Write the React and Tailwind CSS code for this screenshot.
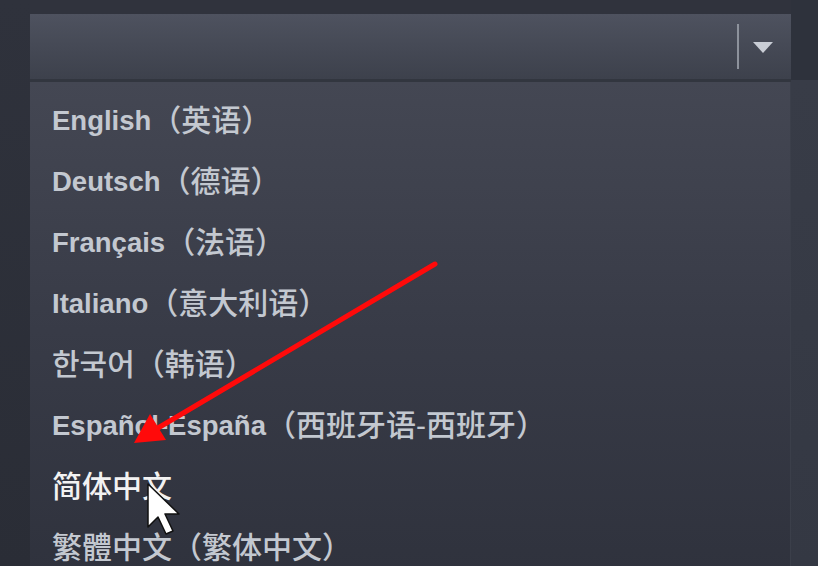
const languages = [
  { latin: "English", cjk: "（英语）" },
  { latin: "Deutsch", cjk: "（德语）" },
  { latin: "Français", cjk: "（法语）" },
  { latin: "Italiano", cjk: "（意大利语）" },
  { latin: "", cjk: "한국어（韩语）" },
  { latin: "Español-España", cjk: "（西班牙语-西班牙）" },
  { latin: "", cjk: "简体中文", active: true },
  { latin: "", cjk: "繁體中文（繁体中文）" },
];

export default function App() {
  return (
    <div
      className="relative w-[818px] h-[566px] overflow-hidden flex bg-[#2b2e37]"
      style={{ fontFamily: '"Liberation Sans", Arial, "Noto Sans CJK SC", "Noto Sans CJK KR", sans-serif' }}
    >
      {/* left gutter */}
      <div className="w-[30px] shrink-0 bg-gradient-to-b from-[#2f323c] to-[#2a2d36]" />

      {/* select + open list */}
      <div className="w-[761px] shrink-0 flex flex-col pt-[14px] bg-[#30333d]">
        <div className="h-[68px] shrink-0 flex items-center justify-end bg-gradient-to-b from-[#4e525f] to-[#3d414c] border-b-[3px] border-[#32363f]">
          <div className="w-[2px] h-[45px] bg-[#8d929c] mr-[14px]" />
          <div className="w-0 h-0 border-l-[10px] border-r-[10px] border-t-[11px] border-l-transparent border-r-transparent border-t-[#c9cdd5] mr-[18px] mt-[2px]" />
        </div>

        <div className="flex-1 flex flex-col pt-[8px] pl-[22px] bg-gradient-to-b from-[#444753] via-[#383b47] to-[#2f323d] border-r border-[#3b3f4a]">
          {languages.map((lang) => (
            <div
              key={lang.cjk}
              className={
                "h-[61px] shrink-0 flex items-center whitespace-nowrap " +
                (lang.active ? "text-[#f2f2f2]" : "text-[#c3c8d0]")
              }
            >
              {lang.latin && <span className="text-[27.5px] font-bold">{lang.latin}</span>}
              <span className="text-[30px] font-medium">{lang.cjk}</span>
            </div>
          ))}
        </div>
      </div>

      {/* right strip */}
      <div className="flex-1 flex flex-col">
        <div className="h-[80px] bg-[#2e323c]" />
        <div className="flex-1 bg-gradient-to-b from-[#383c47] to-[#343843]" />
      </div>

      {/* annotation arrow + mouse cursor */}
      <svg className="absolute inset-0 pointer-events-none" width="818" height="566" viewBox="0 0 818 566">
        <line x1="435" y1="264" x2="158" y2="428" stroke="#ff0a0a" strokeWidth="5" strokeLinecap="round" />
        <polygon points="134,443 150,414 166,440" fill="#ff0a0a" />
        <path
          d="M148 484 L148 527 L158 517 L166 534 L173 531 L165 514 L179 514 Z"
          fill="#ffffff"
          stroke="#111111"
          strokeWidth="1.5"
          strokeLinejoin="round"
        />
      </svg>
    </div>
  );
}
